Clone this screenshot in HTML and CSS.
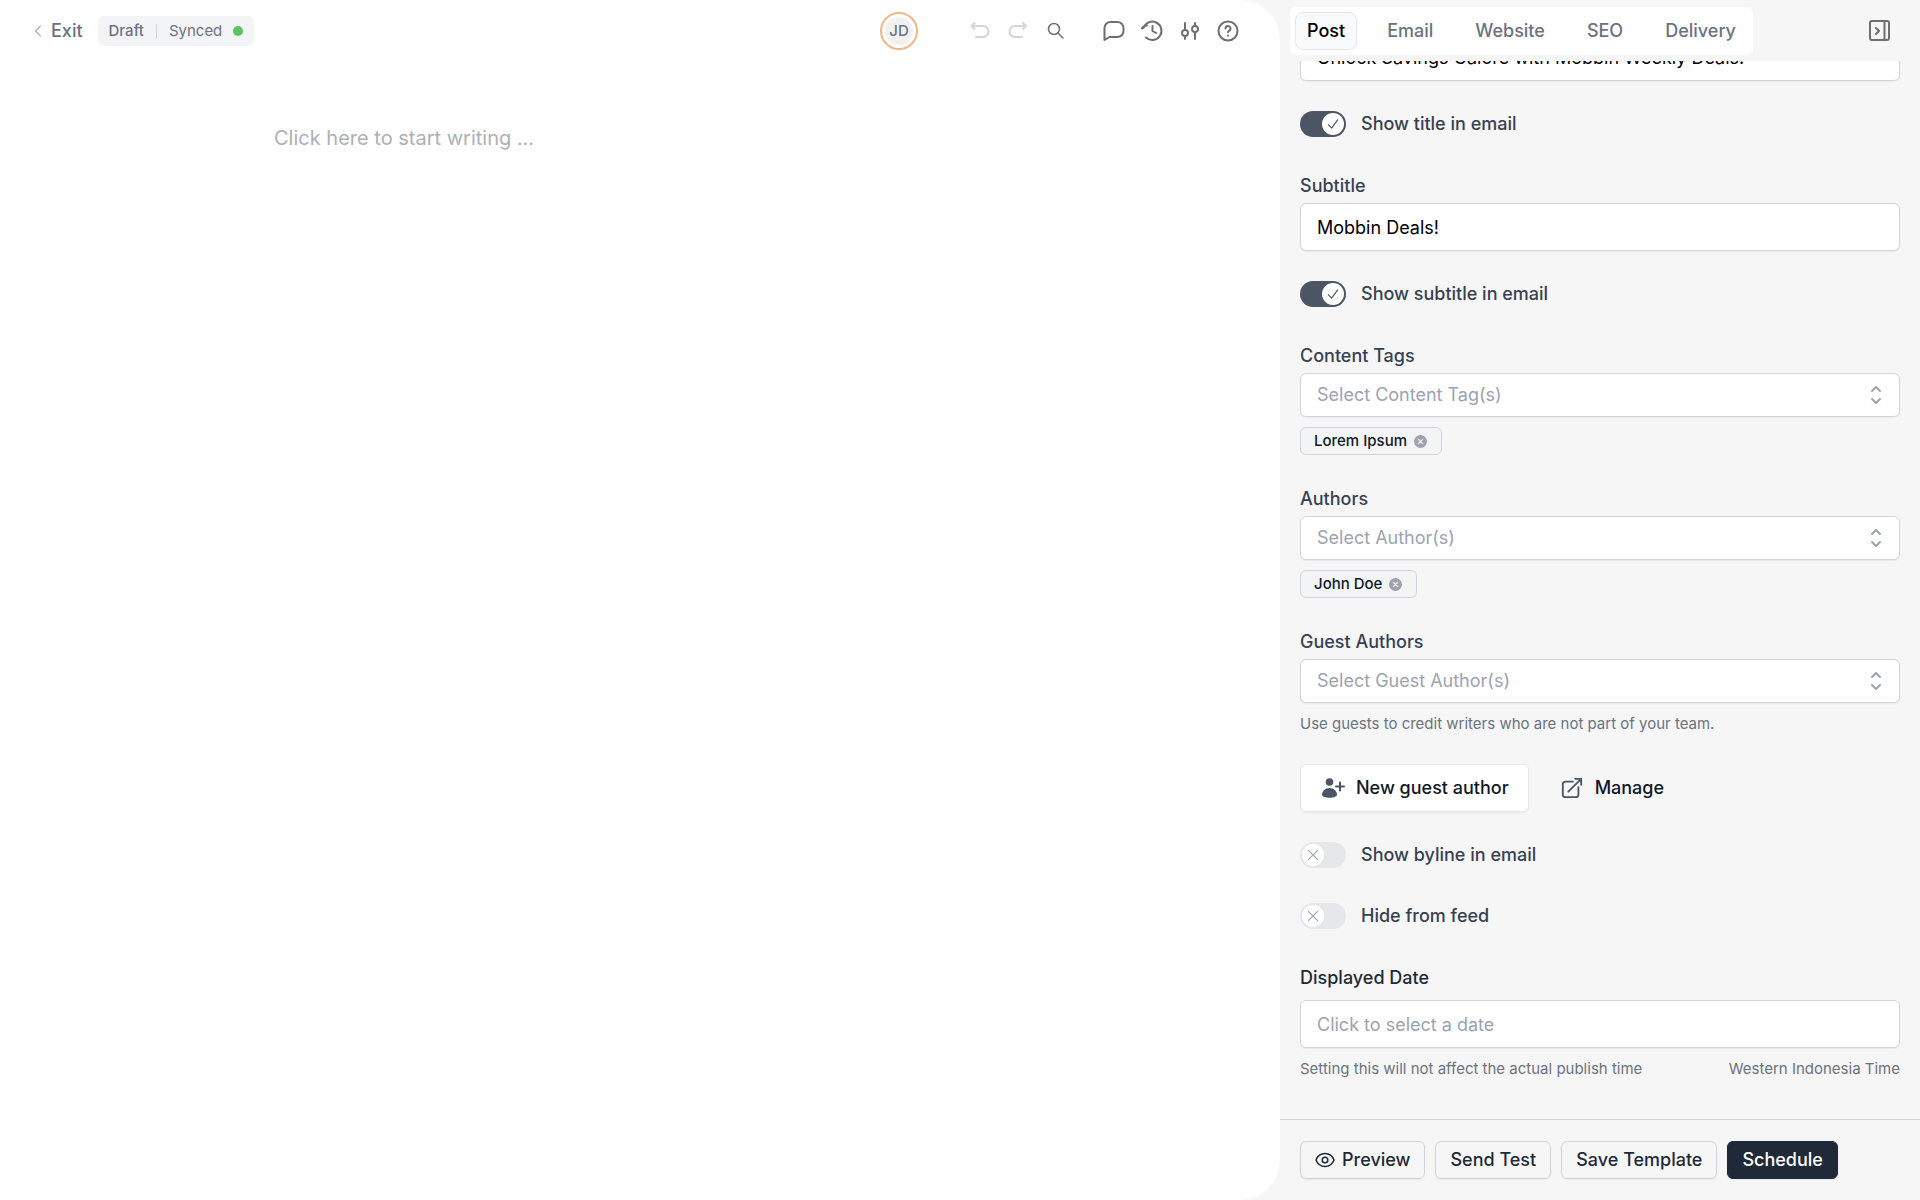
FILE: index.html
```html
<!DOCTYPE html>
<html lang="en">
<head>
<meta charset="utf-8">
<title>Edit post</title>
<meta name="viewport" content="width=device-width, initial-scale=1">
<link rel="stylesheet" href="styles.css">
</head>

<body>
<div class="app">

  <!-- editor -->
  <main class="editor">
    <header class="topbar">
      <a href="#" class="exit">
        <svg width="8" height="12" viewBox="0 0 8 12"><path d="M6.5 1 1.5 6l5 5"/></svg>
        Exit
      </a>
      <div class="status">
        <span class="draft">Draft</span>
        <span class="sep"></span>
        <span>Synced</span>
        <span class="dot"></span>
      </div>
      <div class="avatar"><span>JD</span></div>
      <div class="tools history">
        <button type="button" aria-label="Undo" class="off"><svg viewBox="0 0 24 24"><path d="M6.5 4 3.5 7l3 3M4 7h11a5.5 5.5 0 0 1 0 11H8"/></svg></button>
        <button type="button" aria-label="Redo" class="off"><svg viewBox="0 0 24 24"><path d="m17 4 3 3-3 3M20 7H9a5.5 5.5 0 0 0 0 11h7"/></svg></button>
        <button type="button" aria-label="Search" class="search"><svg viewBox="0 0 24 24"><circle cx="10" cy="10" r="5.5"/><path d="m14 14 5 5"/></svg></button>
      </div>
      <div class="tools">
        <button type="button" aria-label="Comments"><svg viewBox="0 0 24 24"><path d="M2.5 21V9a6 6 0 0 1 6-6h7a6 6 0 0 1 6 6v3a6 6 0 0 1-6 6h-8Z"/></svg></button>
        <button type="button" aria-label="Version history"><svg viewBox="0 0 24 24"><path d="M3.5 9A9.200 9.200 0 1 1 6 18.500M2 9.500C3 7.500 4.500 6.500 7 6.500M12.500 7v5l3.500 2"/></svg></button>
        <button type="button" aria-label="Settings"><svg viewBox="0 0 24 24"><path d="M7 4v7M7 17v3M17 4v3M17 13v7"/><circle cx="7" cy="14" r="3"/><circle cx="17" cy="10" r="3"/></svg></button>
        <button type="button" aria-label="Help"><svg viewBox="0 0 24 24"><circle cx="12" cy="12" r="9.5"/><path d="M9.5 9.5a2.500 2.500 0 1 1 3.500 2.300c-.7.3-1 .7-1 1.400M12 16.500v.2"/></svg></button>
      </div>
    </header>
    <div class="page" contenteditable="true" role="textbox" aria-label="Post content"><p>Click here to start writing ...</p></div>
  </main>

  <!-- settings panel -->
  <aside class="panel">
    <header class="panel_head">
      <nav class="tabs">
        <button type="button" class="active">Post</button>
        <button type="button">Email</button>
        <button type="button">Website</button>
        <button type="button">SEO</button>
        <button type="button">Delivery</button>
      </nav>
      <button type="button" class="collapse" aria-label="Collapse panel"><svg viewBox="0 0 24 24"><rect x="2" y="2" width="19" height="19" rx="2"/><path d="M16.5 2v19M8 9l3 3-3 3"/></svg></button>
    </header>

    <form class="fields">
      <div class="field">
        <input type="text" aria-label="Title" value="Unlock Savings Galore with Mobbin Weekly Deals!">
      </div>
      <label class="switch"><input type="checkbox" checked><span class="track"><svg viewBox="0 0 12 12"><path d="m2 6.5 2.800 3L10 2.500"/></svg></span>Show title in email</label>
      <div class="field">
        <label for="subtitle">Subtitle</label>
        <input type="text" id="subtitle" value="Mobbin Deals!">
      </div>
      <label class="switch"><input type="checkbox" checked><span class="track"><svg viewBox="0 0 12 12"><path d="m2 6.5 2.800 3L10 2.500"/></svg></span>Show subtitle in email</label>
      <div class="field">
        <label for="tags">Content Tags</label>
        <div class="select">
          <select id="tags"><option>Select Content Tag(s)</option></select>
          <svg viewBox="0 0 12 20"><path d="m2 6 4-4 4 4M2 14l4 4 4-4"/></svg>
        </div>
        <div class="chip">Lorem Ipsum<button type="button" aria-label="Remove Lorem Ipsum"><svg viewBox="0 0 12 12"><circle cx="6" cy="6" r="6"/><path d="m4 4 4 4M8 4 4 8"/></svg></button></div>
      </div>
      <div class="field">
        <label for="authors">Authors</label>
        <div class="select">
          <select id="authors"><option>Select Author(s)</option></select>
          <svg viewBox="0 0 12 20"><path d="m2 6 4-4 4 4M2 14l4 4 4-4"/></svg>
        </div>
        <div class="chip">John Doe<button type="button" aria-label="Remove John Doe"><svg viewBox="0 0 12 12"><circle cx="6" cy="6" r="6"/><path d="m4 4 4 4M8 4 4 8"/></svg></button></div>
      </div>
      <div class="field">
        <label for="guests">Guest Authors</label>
        <div class="select">
          <select id="guests"><option>Select Guest Author(s)</option></select>
          <svg viewBox="0 0 12 20"><path d="m2 6 4-4 4 4M2 14l4 4 4-4"/></svg>
        </div>
        <p class="hint">Use guests to credit writers who are not part of your team.</p>
      </div>
      <div class="guest_btns">
        <button type="button" class="new_guest"><svg class="person" viewBox="0 0 24 24"><circle cx="9.5" cy="6" r="3.8"/><path d="M2 19c0-4 3.200-7 7.500-7s7.500 3 7.500 7c0 1.500-3.700 2.800-7.500 2.800S2 20.500 2 19Z"/><path class="plus" d="M20 6.500v8M16 10.500h8"/></svg>New guest author</button>
        <a href="#" class="manage"><svg viewBox="0 0 24 24"><path d="M13 5H5a3 3 0 0 0-3 3v11a3 3 0 0 0 3 3h11a3 3 0 0 0 3-3v-8M8 16 22 2M15.500 2H22v6.500"/></svg>Manage</a>
      </div>
      <label class="switch"><input type="checkbox"><span class="track"><svg viewBox="0 0 12 12"><path d="m2 2 8 8M10 2l-8 8"/></svg></span>Show byline in email</label>
      <label class="switch"><input type="checkbox"><span class="track"><svg viewBox="0 0 12 12"><path d="m2 2 8 8M10 2l-8 8"/></svg></span>Hide from feed</label>
      <div class="field date">
        <label for="date">Displayed Date</label>
        <input type="text" id="date" placeholder="Click to select a date">
        <p class="hint"><span>Setting this will not affect the actual publish time</span><span>Western Indonesia Time</span></p>
      </div>
    </form>

    <footer class="actions">
      <button type="button"><svg viewBox="0 0 20 20"><path d="M1 10c1.500-4 5-6.500 9-6.500s7.500 2.500 9 6.500c-1.500 4-5 6.500-9 6.500S2.500 14 1 10Z"/><circle cx="10" cy="10" r="2.8"/></svg>Preview</button>
      <button type="button">Send Test</button>
      <button type="button">Save Template</button>
      <button type="button" class="primary">Schedule</button>
    </footer>
  </aside>

</div>
</body>
</html>
```
FILE: styles.css
```css
*{
	margin:0;
	padding:0;
	box-sizing:border-box;
	}
body{
	font-family:Inter,"Liberation Sans",sans-serif;
	font-size:18px;
	line-height:24px;
	color:#374151;
	background:#f6f6f6;
	}
button,input,select{
	font:inherit;
	color:inherit;
	}
button{
	border:0;
	background:none;
	cursor:pointer;
	}
a{
	color:inherit;
	text-decoration:none;
	}
svg{
	fill:none;
	stroke:currentColor;
	stroke-linecap:round;
	stroke-linejoin:round;
	flex:none;
	}
.app{
	display:grid;
	grid-template-columns:2fr 1fr;
	height:100vh;
	}

/* editor */
.editor{
	background:#fff;
	border-radius:0 40px 40px 0;
	min-width:0;
	}
.topbar{
	display:flex;
	align-items:center;
	height:61px;
	padding:0 40px 0 34px;
	color:#6b7280;
	}
.exit{
	display:flex;
	align-items:center;
	gap:9px;
	font-weight:500;
	}
.status{
	display:flex;
	align-items:center;
	height:30px;
	margin-left:15px;
	padding:0 11px;
	border-radius:6px;
	background:#f3f4f6;
	font-size:15px;
	}
.draft{
	font-weight:500;
	}
.sep{
	width:1px;
	height:14px;
	margin:0 12px;
	background:#d1d5db;
	}
.dot{
	width:10px;
	height:10px;
	margin-left:11px;
	border-radius:50%;
	background:#5bc267;
	}
.avatar{
	width:38px;
	height:38px;
	margin-left:auto;
	padding:3px;
	border:2px solid #f0b684;
	border-radius:50%;
	font-size:15px;
	font-weight:500;
	}
.avatar span{
	display:flex;
	align-items:center;
	justify-content:center;
	height:100%;
	border-radius:50%;
	background:#f1f1f1;
	}
.tools{
	display:flex;
	gap:14px;
	color:#6f6f6f;
	}
.tools button{
	display:flex;
	}
.tools svg{
	width:24px;
	height:24px;
	stroke-width:2;
	}
.history{
	margin:0 34px 0 50px;
	}
.tools .off{
	color:#d4d4d4;
	}
.search svg{
	stroke-width:1.5;
	}
.page{
	margin:62px 0 0 274px;
	font-size:20px;
	line-height:30px;
	color:#adb1b5;
	outline:0;
	}

/* panel */
.panel{
	display:flex;
	flex-direction:column;
	height:100vh;
	min-width:0;
	}
.panel_head{
	display:flex;
	align-items:center;
	justify-content:space-between;
	flex:none;
	height:61px;
	padding:0 28px 0 10px;
	}
.tabs{
	display:flex;
	gap:18px;
	padding:5px;
	border-radius:6px;
	background:#fff;
	font-weight:500;
	color:#6b7280;
	}
.tabs button{
	height:38px;
	padding:0 11px;
	border:1px solid transparent;
	border-radius:8px;
	}
.tabs .active{
	border-color:#e5e7eb;
	background:#f9fafb;
	color:#000;
	}
.collapse{
	display:flex;
	color:#6f6f6f;
	}
.collapse svg{
	width:24px;
	height:24px;
	stroke-width:2;
	}
/* scrolled to the end, so the first field is cut off by the header */
.fields{
	display:flex;
	flex-direction:column;
	justify-content:flex-end;
	flex:1;
	gap:28px;
	min-height:0;
	padding:0 20px 38px;
	overflow:hidden;
	}
.field{
	display:flex;
	flex-direction:column;
	flex:none;
	}
.field label{
	margin-bottom:1px;
	font-weight:500;
	line-height:32px;
	}
.field input{
	width:100%;
	height:48px;
	padding:0 16px;
	border:1px solid #d1d5db;
	border-radius:6px;
	background:#fff;
	box-shadow:0 1px 2px rgba(0,0,0,.06);
	color:#000;
	}
.field input::placeholder{
	color:#9ca3af;
	}
.select{
	display:grid;
	align-items:center;
	}
.select select{
	grid-area:1/1;
	width:100%;
	height:44px;
	padding:0 40px 0 16px;
	border:1px solid #d1d5db;
	border-radius:6px;
	background:#fff;
	box-shadow:0 1px 2px rgba(0,0,0,.06);
	color:#9ca3af;
	appearance:none;
	}
.select svg{
	grid-area:1/1;
	justify-self:end;
	width:12px;
	height:20px;
	margin-right:18px;
	stroke:#9ca3af;
	stroke-width:2;
	pointer-events:none;
	}
.chip{
	display:flex;
	align-items:center;
	align-self:flex-start;
	gap:7px;
	height:28px;
	margin-top:10px;
	padding:0 14px 0 13px;
	border:1px solid #d1d5db;
	border-radius:6px;
	background:#f3f4f6;
	font-size:15px;
	font-weight:500;
	color:#111827;
	}
.chip button{
	display:flex;
	}
.chip svg{
	width:13px;
	height:13px;
	}
.chip circle{
	fill:#9ca3af;
	stroke:none;
	}
.chip path{
	stroke:#fff;
	}
.hint{
	display:flex;
	justify-content:space-between;
	margin-top:9px;
	font-size:15px;
	color:#6b7280;
	}
.switch{
	display:flex;
	align-items:center;
	flex:none;
	gap:15px;
	height:33px;
	padding-bottom:3px;
	font-weight:500;
	cursor:pointer;
	}
.switch input{
	position:absolute;
	opacity:0;
	}
.track{
	display:flex;
	width:46px;
	height:26px;
	padding:2px;
	border-radius:13px;
	background:#e5e7eb;
	color:#9ca3af;
	}
.track svg{
	width:22px;
	height:22px;
	padding:4px;
	border-radius:50%;
	background:#fff;
	}
.switch input:checked + .track{
	justify-content:flex-end;
	background:#4b5563;
	color:#4b5563;
	}
.guest_btns{
	display:flex;
	flex:none;
	gap:32px;
	font-weight:500;
	color:#111827;
	}
.new_guest,.manage{
	display:flex;
	align-items:center;
	gap:12px;
	height:48px;
	}
.new_guest{
	padding:0 19px;
	border:1px solid #e5e7eb;
	border-radius:6px;
	background:#fff;
	box-shadow:0 1px 2px rgba(0,0,0,.06);
	font-weight:500;
	}
.guest_btns svg{
	width:22px;
	height:22px;
	stroke:#4b5563;
	stroke-width:2;
	}
.guest_btns .person{
	width:24px;
	height:24px;
	overflow:visible;
	fill:#4b5563;
	stroke:none;
	}
.person .plus{
	stroke:#4b5563;
	}
.date label{
	margin-bottom:6px;
	color:#1f2937;
	}
.actions{
	display:flex;
	flex:none;
	gap:10px;
	padding:21px 20px;
	border-top:1px solid #d1d5db;
	}
.actions button{
	display:flex;
	align-items:center;
	gap:7px;
	height:38px;
	padding:0 14px;
	border:1px solid #d1d5db;
	border-radius:6px;
	box-shadow:0 1px 2px rgba(0,0,0,.06);
	font-weight:500;
	color:#1f2937;
	}
.actions svg{
	width:20px;
	height:20px;
	stroke-width:1.5;
	}
.actions .primary{
	border-color:#1f2937;
	background:#1f2937;
	color:#fff;
	}
```
